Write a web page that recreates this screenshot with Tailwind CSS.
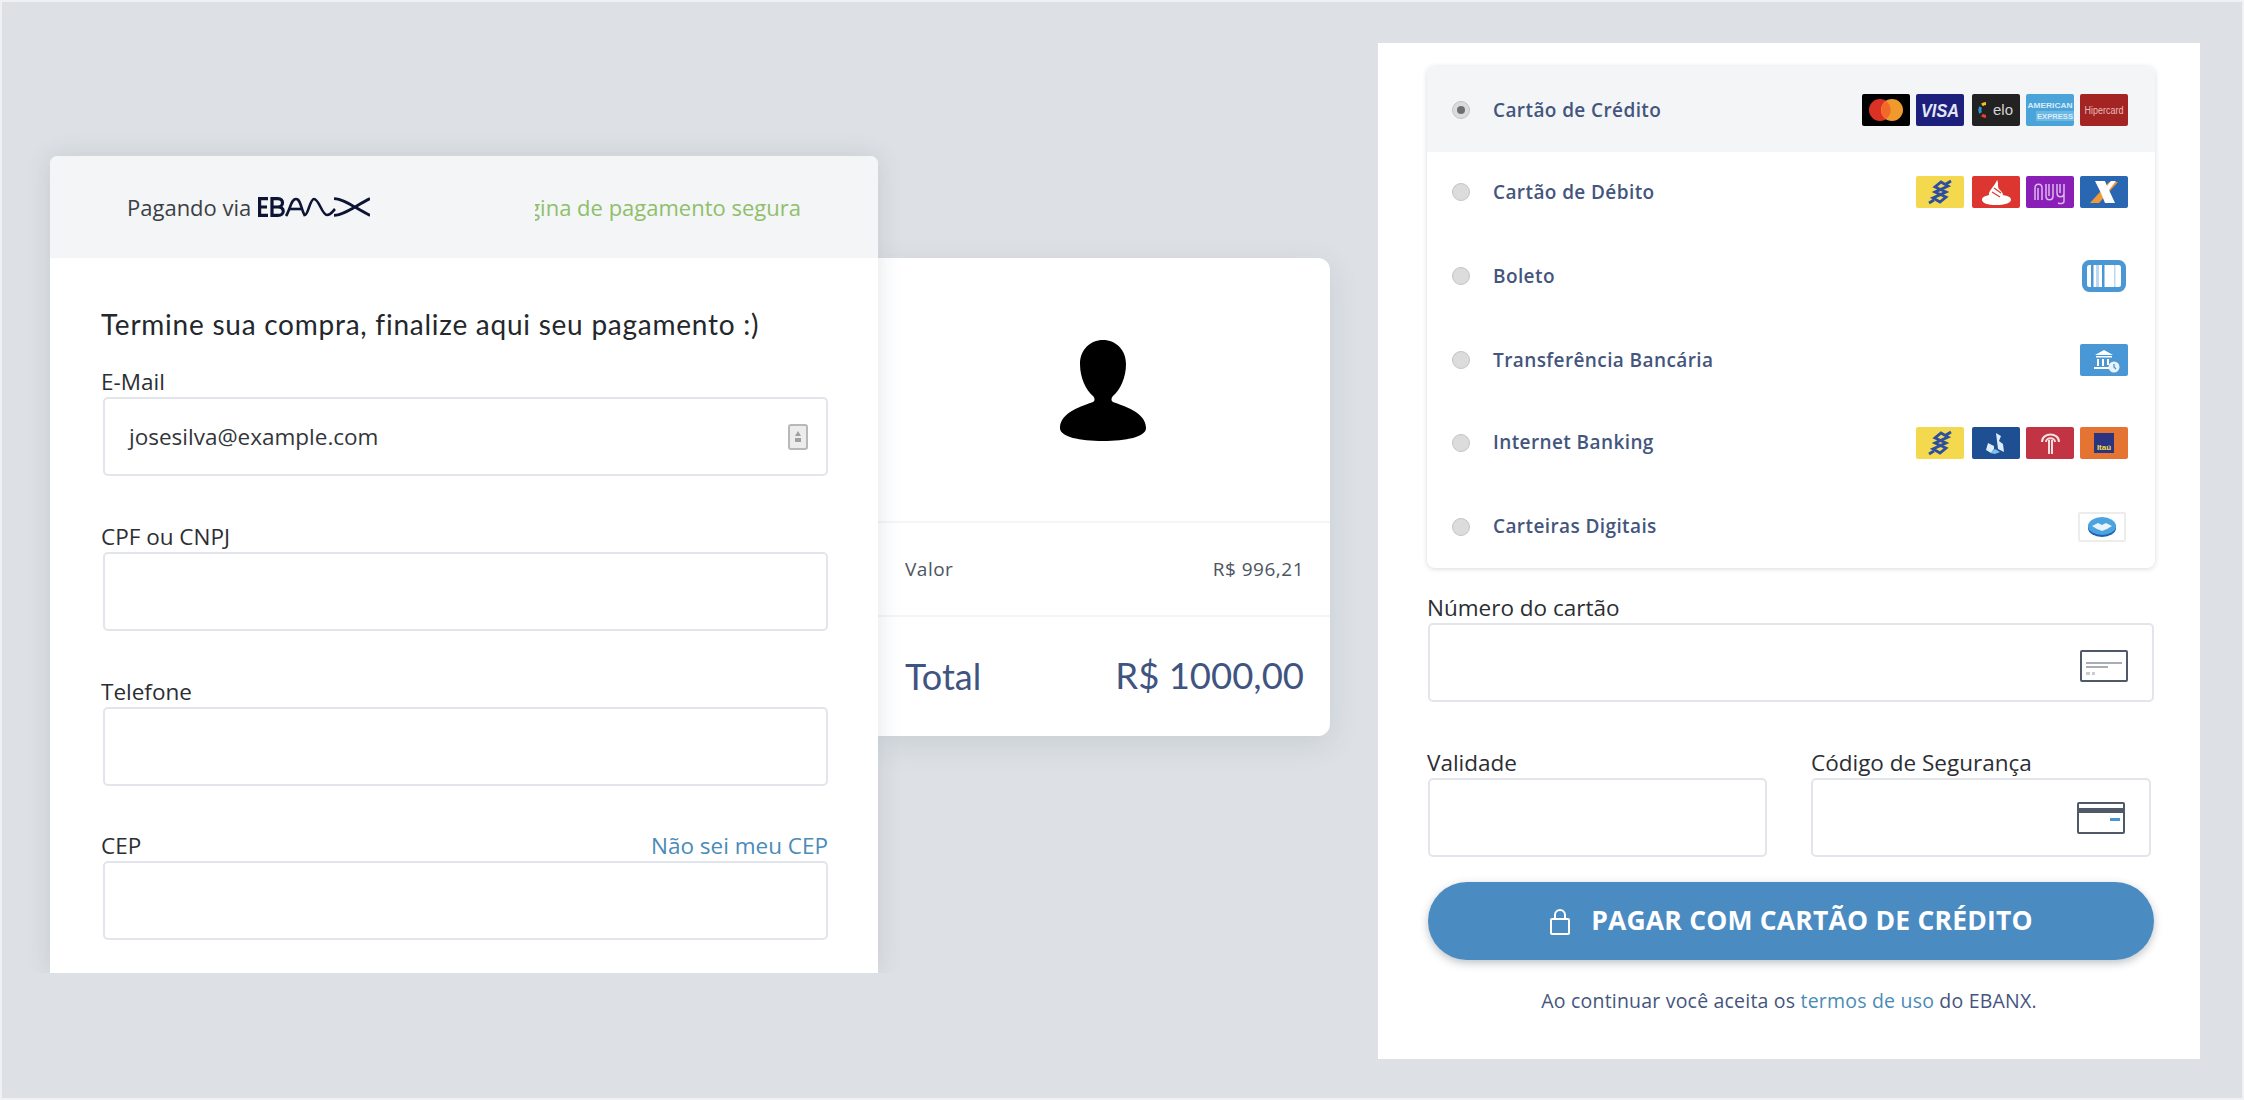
<!DOCTYPE html>
<html lang="pt-BR">
<head>
  <meta charset="UTF-8" />
  <title>Pagamento EBANX</title>
  <script src="https://cdn.jsdelivr.net/npm/@tailwindcss/browser@4"></script>
</head>
<body class="bg-[#dde1e5] font-['Open_Sans',sans-serif] overflow-hidden">
<div class="flex items-start w-[2244px] h-[1100px] border-2 border-[#eff1f2] pl-[48px]">

  <!-- checkout form -->
  <div class="relative z-10 mt-[154px] w-[828px] h-[817px] shrink-0 bg-white rounded-t-lg shadow-[0_0_24px_rgba(60,70,90,0.14)] [clip-path:inset(-40px_-40px_0_-40px)]">
    <div class="h-[102px] bg-[#f3f5f7] rounded-t-lg flex items-center justify-between pl-[77px] pr-[77px]">
      <div class="flex items-center gap-[7px]">
        <span class="text-[22px] text-[#3c3f44]">Pagando via</span>
        <svg width="112" height="20" viewBox="0 0 112 20" fill="none" stroke="#0c1533" stroke-width="3.200">
          <path d="M10 1.600H1.600v16.800H10M1.600 10H9" />
          <path d="M14 1.600v16.800h6c7 0 7-8.400 0-8.400h-6 6c6 0 6-8.400 0-8.400z" />
          <path d="M28 19c4-6 5-17 10-17s5 11 9 17" stroke-width="2.600" />
          <path d="M32 12h11" stroke-width="2.600" />
          <path d="M47 18c3 0 5-16 9-16 5 0 8 16 13 16 4 0 5-3 8-6" stroke-width="2.600" />
          <path d="M76 1.600c10 0 22 10 36 16.800M76 18.400c10 0 22-10 36-16.800" stroke-width="2.800" />
        </svg>
      </div>
      <div class="w-[266px] overflow-hidden flex justify-end">
        <span class="text-[22px] text-[#8fbf69] whitespace-nowrap">Página de pagamento segura</span>
      </div>
    </div>
    <div class="px-[51px] pt-[49px]">
      <h2 class="text-[28px] leading-[34px] text-[#24272c] font-['Lato',sans-serif] mb-[26px] tracking-[0.75px] whitespace-nowrap">Termine sua compra, finalize aqui seu pagamento :)</h2>

      <div class="mb-[46px]">
        <label class="block text-[22.5px] leading-[30px] text-[#2b2e33]">E-Mail</label>
        <div class="h-[79px] ml-[2px] w-[725px] border-2 border-[#e3e5ec] rounded-[5px] flex items-center justify-between pl-[24px] pr-[18px]">
          <span class="text-[22.5px] text-[#33363b]">josesilva@example.com</span>
          <svg width="20" height="26" viewBox="0 0 20 26">
            <rect x="1" y="1" width="18" height="24" rx="2" fill="#ececec" stroke="#b8b8b8" stroke-width="2" />
            <path d="M10 7l3 5H7z" fill="#a0a0a0" />
            <rect x="7" y="14" width="6" height="4" fill="#a0a0a0" />
          </svg>
        </div>
      </div>

      <div class="mb-[46px]">
        <label class="block text-[22.5px] leading-[30px] text-[#2b2e33]">CPF ou CNPJ</label>
        <div class="h-[79px] ml-[2px] w-[725px] border-2 border-[#e3e5ec] rounded-[5px]"></div>
      </div>

      <div class="mb-[45px]">
        <label class="block text-[22.5px] leading-[30px] text-[#2b2e33]">Telefone</label>
        <div class="h-[79px] ml-[2px] w-[725px] border-2 border-[#e3e5ec] rounded-[5px]"></div>
      </div>

      <div>
        <div class="flex justify-between w-[727px] text-[22.5px] leading-[30px]">
          <label class="text-[#2b2e33]">CEP</label>
          <a class="text-[#4a8bb8]">Não sei meu CEP</a>
        </div>
        <div class="h-[79px] ml-[2px] w-[725px] border-2 border-[#e3e5ec] rounded-[5px]"></div>
      </div>
    </div>
  </div>

  <!-- order summary behind the form -->
  <div class="mt-[256px] w-[452px] h-[478px] shrink-0 bg-white rounded-r-xl shadow-[0_8px_30px_rgba(60,70,90,0.12)] flex flex-col">
    <div class="h-[263px] flex items-center justify-center">
      <svg width="88" height="102" viewBox="0 0 88 102" class="ml-[-3px] mb-[-2px]">
        <path fill="#000" d="M44 0c13 0 23 10 23 24 0 14-6 26-13 32-2 2-2 5 0 6 10 4 33 10 33 26 0 9-20 13-43 13S1 97 1 88c0-16 23-22 33-26 2-1 2-4 0-6-7-6-13-18-13-32C21 10 31 0 44 0z" />
      </svg>
    </div>
    <div class="h-[94px] border-t-2 border-[#f4f5f7] flex items-center justify-between pl-[27px] pr-[26px] text-[19px] tracking-[0.5px] text-[#4c5560]">
      <span>Valor</span>
      <span>R$ 996,21</span>
    </div>
    <div class="flex-1 border-t-2 border-[#f4f5f7] flex items-center justify-between pl-[27px] pr-[26px] pb-[2px] text-[#3f5480] font-['Lato',sans-serif]">
      <span class="text-[36px]">Total</span>
      <span class="text-[36.5px]">R$ 1000,00</span>
    </div>
  </div>

  <!-- payment methods -->
  <div class="mt-[41px] ml-[48px] w-[822px] h-[1016px] shrink-0 bg-white px-[49px] pt-[23px]">
    <div class="w-[728px] h-[502px] rounded-lg shadow-[0_1px_5px_rgba(60,70,90,0.2)] overflow-hidden flex flex-col">

      <div class="h-[86px] bg-[#f3f5f7] flex items-center justify-between pl-[25px] pr-[27px] pt-[2px]">
        <div class="flex items-center gap-[23px]">
          <span class="w-[18px] h-[18px] rounded-full bg-[#dcdcdc] border border-[#c4c4c4] flex items-center justify-center"><span class="w-[8px] h-[8px] rounded-full bg-[#6f6f6f]"></span></span>
          <span class="text-[19px] font-semibold text-[#44557e] tracking-[0.4px]">Cartão de Crédito</span>
        </div>
        <div class="flex items-center gap-[6px]">
          <svg width="48" height="32" viewBox="0 0 48 32" class="rounded-[2px]"><rect width="48" height="32" fill="#000"/><circle cx="18" cy="16" r="11" fill="#dc3226"/><circle cx="30" cy="16" r="11" fill="#f09a2e"/><path d="M24 7a11 11 0 0 1 0 18 11 11 0 0 1 0-18z" fill="#f2682a"/></svg>
          <svg width="48" height="32" viewBox="0 0 48 32" class="rounded-[2px]"><rect width="48" height="32" fill="#1c1f7c"/><text x="24" y="23" text-anchor="middle" fill="#e4e7f4" font-family="Liberation Sans" font-size="19" font-weight="700" font-style="italic" textLength="38" lengthAdjust="spacingAndGlyphs">VISA</text></svg>
          <svg width="48" height="32" viewBox="0 0 48 32" class="rounded-[2px] ml-[2px]"><rect width="48" height="32" fill="#222"/><path d="M14 9.500a6.500 6.500 0 0 0-4 1.500" fill="none" stroke="#f4c21a" stroke-width="3"/><path d="M8.500 13a7 7 0 0 0 0 6" fill="none" stroke="#2a9ad6" stroke-width="3"/><path d="M10 21a6.500 6.500 0 0 0 4 1.500" fill="none" stroke="#e5432d" stroke-width="3"/><text x="31" y="21" text-anchor="middle" fill="#d4d4d4" font-family="Liberation Sans" font-size="15">elo</text></svg>
          <svg width="48" height="32" viewBox="0 0 48 32" class="rounded-[2px]"><rect width="48" height="32" fill="#4aa4da"/><rect x="10" y="17" width="38" height="10" fill="#6db7e3"/><text x="24" y="14" text-anchor="middle" fill="#d8ecf8" font-family="Liberation Sans" font-size="8" font-weight="700" textLength="45" lengthAdjust="spacingAndGlyphs">AMERICAN</text><text x="29" y="25" text-anchor="middle" fill="#d8ecf8" font-family="Liberation Sans" font-size="8" font-weight="700" textLength="36" lengthAdjust="spacingAndGlyphs">EXPRESS</text></svg>
          <svg width="48" height="32" viewBox="0 0 48 32" class="rounded-[2px]"><rect width="48" height="32" fill="#a32423"/><text x="24" y="19.500" text-anchor="middle" fill="#e8bdb8" font-family="Liberation Sans" font-size="10" textLength="39" lengthAdjust="spacingAndGlyphs">Hipercard</text></svg>
        </div>
      </div>

      <div class="h-[82px] flex items-center justify-between pl-[25px] pr-[27px] pb-[2px]">
        <div class="flex items-center gap-[23px]">
          <span class="w-[18px] h-[18px] rounded-full bg-[#dcdcdc] border border-[#c4c4c4]"></span>
          <span class="text-[19px] font-semibold text-[#44557e] tracking-[0.4px]">Cartão de Débito</span>
        </div>
        <div class="flex items-center gap-[6px]">
          <svg width="48" height="32" viewBox="0 0 48 32" class="rounded-[2px]"><rect width="48" height="32" fill="#f4d94e"/><g fill="none" stroke="#2d4f9e" stroke-width="2.800"><path d="M25 6l7 4-13 6 11 5-6 5-7-4 13-6-11-5z"/><path d="M13 27l5-3M35 5l-5 3"/></g></svg>
          <svg width="48" height="32" viewBox="0 0 48 32" class="rounded-[2px] ml-[2px]"><rect width="48" height="32" fill="#dd3630"/><path fill="#fff" d="M25 4c2 3 0 6 2 9 2 2 4 4 4 6 5 1 8 2 8 5 0 3-7 5-15 5S10 27 10 24c0-3 3-4 7-5-1-4 6-9 8-15z"/><path d="M22 12l7 5M20 16l8 5" stroke="#dd3630" stroke-width="1.200"/></svg>
          <svg width="48" height="32" viewBox="0 0 48 32" class="rounded-[2px]"><rect width="48" height="32" fill="#8a1fb8"/><g fill="none" stroke="#dcb9ea" stroke-width="1.500"><path d="M9 24V12c0-5 7-5 7 0v12M12 24V12M20 8v12c0 5 7 5 7 0V8M23 8v12"/><path d="M31 8v9c0 5 7 5 7 0V8M34 8v9M38 17v8c0 3-4 3-6 2"/></g></svg>
          <svg width="48" height="32" viewBox="0 0 48 32" class="rounded-[2px]"><rect width="48" height="32" fill="#2a67b2"/><path d="M38 6h-9L10 27h9z" fill="#ee9a3a"/><path d="M15 5h10l2 5 4-5h5l-7 9 6 13H25l-4-10z" fill="#fff"/></svg>
        </div>
      </div>

      <div class="h-[84px] flex items-center justify-between pl-[25px] pr-[29px]">
        <div class="flex items-center gap-[23px]">
          <span class="w-[18px] h-[18px] rounded-full bg-[#dcdcdc] border border-[#c4c4c4]"></span>
          <span class="text-[19px] font-semibold text-[#44557e] tracking-[0.4px]">Boleto</span>
        </div>
        <svg width="44" height="32" viewBox="0 0 44 32"><rect x="2.500" y="2.500" width="39" height="27" rx="5" fill="#fff" stroke="#4a97d5" stroke-width="5"/><path d="M9 5h2.500v22H9zM20 5h2.500v22H20z" fill="#4a97d5"/><path d="M14 5h3v22h-3zM32 5h1.500v22H32z" fill="#bcd9ef"/></svg>
      </div>

      <div class="h-[84px] flex items-center justify-between pl-[25px] pr-[27px]">
        <div class="flex items-center gap-[23px]">
          <span class="w-[18px] h-[18px] rounded-full bg-[#dcdcdc] border border-[#c4c4c4]"></span>
          <span class="text-[19px] font-semibold text-[#44557e] tracking-[0.4px]">Transferência Bancária</span>
        </div>
        <svg width="48" height="32" viewBox="0 0 48 32" class="rounded-[2px]"><rect width="48" height="32" fill="#4a97d5"/><path d="M15 11l9-5 9 5zM16 12h16v1.500H16zM17 15h2v7h-2zM22 15h2v7h-2zM27 15h2v6h-2zM14 23h15v2H14z" fill="#fff"/><circle cx="34" cy="23" r="5.500" fill="#e8f2fa"/><path d="M34 20v3l2 2" fill="none" stroke="#4a97d5" stroke-width="1.300"/></svg>
      </div>

      <div class="h-[83px] flex items-center justify-between pl-[25px] pr-[27px] pb-[2px]">
        <div class="flex items-center gap-[23px]">
          <span class="w-[18px] h-[18px] rounded-full bg-[#dcdcdc] border border-[#c4c4c4]"></span>
          <span class="text-[19px] font-semibold text-[#44557e] tracking-[0.4px]">Internet Banking</span>
        </div>
        <div class="flex items-center gap-[6px]">
          <svg width="48" height="32" viewBox="0 0 48 32" class="rounded-[2px]"><rect width="48" height="32" fill="#f4d94e"/><g fill="none" stroke="#2d4f9e" stroke-width="2.800"><path d="M25 6l7 4-13 6 11 5-6 5-7-4 13-6-11-5z"/><path d="M13 27l5-3M35 5l-5 3"/></g></svg>
          <svg width="48" height="32" viewBox="0 0 48 32" class="rounded-[2px] ml-[2px]"><rect width="48" height="32" fill="#1d4f92"/><path d="M24 6l5 3-2 5 4 3 1 8-6-3zM16 16l6 3v3l-3 4-5-3z" fill="#dbeefa"/><path d="M23 22l5 3-5 2-5-1z" fill="#7fc1ee"/></svg>
          <svg width="48" height="32" viewBox="0 0 48 32" class="rounded-[2px]"><rect width="48" height="32" fill="#c23343"/><g fill="none" stroke="#f6dfe0" stroke-width="2"><path d="M16 15c0-10 17-10 17 0"/><path d="M20 15c0-5 9-5 9 0"/><path d="M23 13v14M26 13v14"/></g></svg>
          <svg width="48" height="32" viewBox="0 0 48 32" class="rounded-[2px]"><rect width="48" height="32" fill="#e57332"/><rect x="14" y="6" width="20" height="20" fill="#2a3480"/><text x="24" y="23" text-anchor="middle" fill="#f2dc4e" font-family="Liberation Sans" font-size="8" font-weight="700">Itaú</text></svg>
        </div>
      </div>

      <div class="flex-1 flex items-center justify-between pl-[25px] pr-[29px]">
        <div class="flex items-center gap-[23px]">
          <span class="w-[18px] h-[18px] rounded-full bg-[#dcdcdc] border border-[#c4c4c4]"></span>
          <span class="text-[19px] font-semibold text-[#44557e] tracking-[0.4px]">Carteiras Digitais</span>
        </div>
        <svg width="48" height="30" viewBox="0 0 48 30"><rect x="1" y="1" width="46" height="28" rx="1" fill="#fff" stroke="#ececec" stroke-width="2"/><ellipse cx="24" cy="16" rx="14" ry="9" fill="#1d62b0"/><ellipse cx="24" cy="14" rx="14" ry="9" fill="#4ba3df"/><path d="M14 14l6-3 4 2 4-2 6 3-5 3-5 2-5-2z" fill="#e9f3fb"/></svg>
      </div>
    </div>

    <div class="mt-[25px]">
      <label class="block text-[22.5px] leading-[30px] text-[#2b2e33]">Número do cartão</label>
      <div class="h-[79px] ml-[1px] w-[726px] border-2 border-[#e3e5ec] rounded-[5px] flex items-center justify-end pr-[24px] pt-[7px]">
        <svg width="48" height="32" viewBox="0 0 48 32"><rect x="1" y="1" width="46" height="30" rx="1" fill="#fff" stroke="#4f5967" stroke-width="2"/><path d="M6 12h36v2H6zM6 16h22v2H6z" fill="#a9aeb6"/><path d="M6 22h4v3H6zM12 22h3v3h-3z" fill="#c9ccd1"/></svg>
      </div>
    </div>

    <div class="flex mt-[46px]">
      <div class="w-[387px]">
        <label class="block text-[22.5px] leading-[30px] text-[#2b2e33]">Validade</label>
        <div class="h-[79px] ml-[1px] w-[339px] border-2 border-[#e3e5ec] rounded-[5px]"></div>
      </div>
      <div>
        <label class="block text-[22.5px] leading-[30px] text-[#2b2e33]">Código de Segurança</label>
        <div class="h-[79px] w-[340px] border-2 border-[#e3e5ec] rounded-[5px] flex items-center justify-end pr-[24px]">
          <svg width="48" height="32" viewBox="0 0 48 32"><rect x="1" y="1" width="46" height="30" rx="1" fill="#fff" stroke="#4f5967" stroke-width="2"/><rect x="1" y="6" width="46" height="5" fill="#4f5967"/><rect x="33" y="16" width="10" height="3" fill="#4a97d5"/></svg>
        </div>
      </div>
    </div>

    <button class="mt-[25px] ml-[1px] w-[726px] h-[78px] rounded-full bg-[#4a8bc2] shadow-[0_3px_8px_rgba(40,50,70,0.3)] flex items-center justify-center gap-[20px] text-white">
      <svg width="22" height="27" viewBox="0 0 22 27" fill="none" stroke="#fff" stroke-width="2"><rect x="2" y="11" width="18" height="15" rx="1"/><path d="M6 11V7a5 5 0 0 1 10 0v4"/></svg>
      <span class="text-[26.5px] font-bold tracking-[0.2px]">PAGAR COM CARTÃO DE CRÉDITO</span>
    </button>

    <p class="mt-[26px] text-center text-[19.5px] text-[#44557e] tracking-[0.2px]">Ao continuar você aceita os <a class="text-[#4a8bb8]">termos de uso</a> do EBANX.</p>
  </div>
</div>
</body>
</html>
